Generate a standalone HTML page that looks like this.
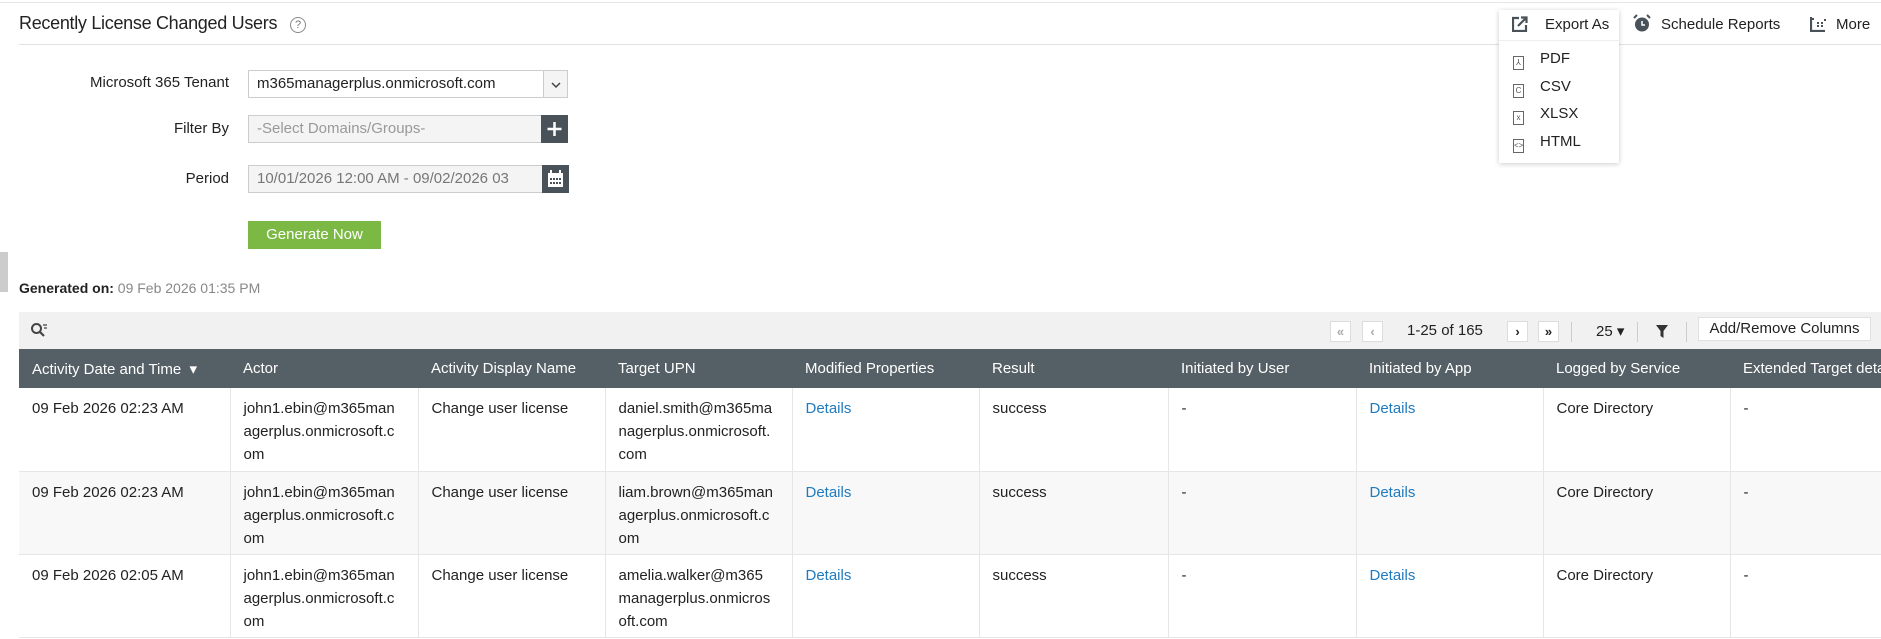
<!DOCTYPE html>
<html><head><meta charset="utf-8"><style>
*{box-sizing:border-box;margin:0;padding:0}
body{width:1881px;height:639px;overflow:hidden;background:#fff;font-family:"Liberation Sans",sans-serif;color:#222;font-size:15px;position:relative}
.abs{position:absolute}
.top{left:0;top:2px;width:1881px;height:1px;background:#e6e6e6}
.title{left:19px;top:13px;font-size:18px;color:#222;letter-spacing:-0.3px}
.help{left:290px;top:17px;width:16px;height:16px;border:1px solid #888;border-radius:50%;font-size:11px;color:#777;text-align:center;line-height:14px}
.hr{left:19px;top:44px;width:1862px;height:1px;background:#e2e2e2}
.lbl{font-size:15px;color:#222;text-align:right;width:200px}
.inp{border:1px solid #ccc;height:28px;font-size:15px;line-height:26px;padding-left:8px}
.btn{background:#4a5259;color:#fff}
.gen{left:248px;top:221px;width:133px;height:28px;background:#7cb944;color:#fff;text-align:center;line-height:28px;font-size:15px}
.tool{left:19px;top:312px;width:1862px;height:37px;background:#f1f1f1}
.pb{border:1px solid #ddd;background:#fff;width:21px;height:21px;text-align:center;font-size:13px;line-height:19px;font-weight:bold}
table{position:absolute;left:19px;top:349px;border-collapse:collapse;table-layout:fixed;width:1900px}
th{background:#555f66;color:#fff;font-weight:normal;text-align:left;height:39px;padding-left:13px;font-size:15px;white-space:nowrap;overflow:hidden}
td{vertical-align:top;padding:9px 13px 0;line-height:23px;height:83px;border-right:1px solid #e6e6e6;border-bottom:1px solid #e6e6e6;font-size:15px}
tr.alt td{background:#f8f8f8}
a{color:#1f7bbf;text-decoration:none}
.dd{left:1499px;top:10px;width:120px;height:153px;background:#fff;box-shadow:0 1px 5px rgba(0,0,0,.2)}
.ddi{position:absolute;left:14px;font-size:15px}
.ic{display:inline-block;width:11px;height:14px;border:1px solid #666;margin-right:16px;vertical-align:-2px;font-size:8px;text-align:center;line-height:12px;color:#555}
</style></head><body>
<div class="abs top"></div>
<div class="abs title">Recently License Changed Users</div>
<div class="abs help">?</div>
<div class="abs hr"></div>

<div class="abs lbl" style="left:29px;top:74px">Microsoft 365 Tenant</div>
<div class="abs inp" style="left:248px;top:70px;width:320px;background:#fff">m365managerplus.onmicrosoft.com</div>
<div class="abs" style="left:543px;top:71px;width:24px;height:26px;border-left:1px solid #ccc;background:#f4f4f4"><svg width="24" height="26"><path d="M8 12l4 4 4-4" stroke="#444" stroke-width="1.5" fill="none"/></svg></div>

<div class="abs lbl" style="left:29px;top:120px">Filter By</div>
<div class="abs inp" style="left:248px;top:115px;width:297px;background:#f4f4f4;color:#999">-Select Domains/Groups-</div>
<div class="abs btn" style="left:541px;top:115px;width:27px;height:28px"><svg width="27" height="28"><path d="M13.5 7v14M6.5 14h14" stroke="#fff" stroke-width="2.5"/></svg></div>

<div class="abs lbl" style="left:29px;top:170px">Period</div>
<div class="abs inp" style="left:248px;top:165px;width:300px;background:#f4f4f4;color:#777;overflow:hidden;white-space:nowrap">10/01/2026 12:00 AM - 09/02/2026 03</div>
<div class="abs btn" style="left:542px;top:165px;width:27px;height:28px"><svg width="27" height="28"><rect x="6" y="8" width="15" height="14" fill="#fff"/><rect x="6" y="8" width="15" height="3" fill="#fff"/><path d="M9 5v4M18 5v4" stroke="#fff" stroke-width="2"/><g fill="#4a5259"><rect x="8" y="13" width="2" height="2"/><rect x="11" y="13" width="2" height="2"/><rect x="14" y="13" width="2" height="2"/><rect x="17" y="13" width="2" height="2"/><rect x="8" y="17" width="2" height="2"/><rect x="11" y="17" width="2" height="2"/><rect x="14" y="17" width="2" height="2"/><rect x="17" y="17" width="2" height="2"/></g></svg></div>

<div class="abs gen">Generate Now</div>
<div class="abs" style="left:0;top:252px;width:8px;height:40px;background:#ccc"></div>

<div class="abs" style="left:19px;top:280px;font-size:14px"><b>Generated on:</b> <span style="color:#888">09 Feb 2026 01:35 PM</span></div>

<div class="abs tool"></div>
<svg class="abs" style="left:30px;top:322px" width="18" height="16"><circle cx="6.5" cy="6.5" r="4.5" stroke="#444" stroke-width="2" fill="none"/><path d="M10 10l4 4" stroke="#444" stroke-width="2.2"/><path d="M13 3h4M14 6h3" stroke="#444" stroke-width="1.2"/></svg>
<div class="abs pb" style="left:1330px;top:321px;color:#aaa">«</div>
<div class="abs pb" style="left:1362px;top:321px;color:#aaa">‹</div>
<div class="abs" style="left:1407px;top:322px;font-size:15px">1-25 of 165</div>
<div class="abs pb" style="left:1507px;top:321px">›</div>
<div class="abs pb" style="left:1538px;top:321px">»</div>
<div class="abs" style="left:1571px;top:322px;width:1px;height:20px;background:#ccc"></div>
<div class="abs" style="left:1596px;top:322px;font-size:15px">25 ▾</div>
<div class="abs" style="left:1637px;top:322px;width:1px;height:20px;background:#ccc"></div>
<svg class="abs" style="left:1655px;top:323px" width="14" height="16"><path d="M1 2h12l-4.5 6v7l-3-2V8z" fill="#333"/></svg>
<div class="abs" style="left:1686px;top:322px;width:1px;height:20px;background:#ccc"></div>
<div class="abs" style="left:1698px;top:317px;width:173px;height:24px;background:#fff;border:1px solid #e0e0e0;text-align:center;line-height:22px;font-size:15px">Add/Remove Columns</div>

<table>
<colgroup><col style="width:211px"><col style="width:188px"><col style="width:187px"><col style="width:187px"><col style="width:187px"><col style="width:189px"><col style="width:188px"><col style="width:187px"><col style="width:187px"><col style="width:189px"></colgroup>
<tr><th>Activity Date and Time &nbsp;▾</th><th>Actor</th><th>Activity Display Name</th><th>Target UPN</th><th>Modified Properties</th><th>Result</th><th>Initiated by User</th><th>Initiated by App</th><th>Logged by Service</th><th>Extended Target details</th></tr>
<tr><td>09 Feb 2026 02:23 AM</td><td>john1.ebin@m365man agerplus.onmicrosoft.c om</td><td>Change user license</td><td>daniel.smith@m365ma nagerplus.onmicrosoft. com</td><td><a>Details</a></td><td>success</td><td>-</td><td><a>Details</a></td><td>Core Directory</td><td>-</td></tr>
<tr class="alt"><td>09 Feb 2026 02:23 AM</td><td>john1.ebin@m365man agerplus.onmicrosoft.c om</td><td>Change user license</td><td>liam.brown@m365man agerplus.onmicrosoft.c om</td><td><a>Details</a></td><td>success</td><td>-</td><td><a>Details</a></td><td>Core Directory</td><td>-</td></tr>
<tr><td>09 Feb 2026 02:05 AM</td><td>john1.ebin@m365man agerplus.onmicrosoft.c om</td><td>Change user license</td><td>amelia.walker@m365 managerplus.onmicros oft.com</td><td><a>Details</a></td><td>success</td><td>-</td><td><a>Details</a></td><td>Core Directory</td><td>-</td></tr>
</table>

<div class="abs dd">
<div class="ddi" style="top:6px;left:46px">Export As</div>
<div style="position:absolute;top:30px;left:0;width:120px;height:1px;background:#eee"></div>
<div class="ddi" style="top:40px"><span class="ic">⅄</span>PDF</div>
<div class="ddi" style="top:68px"><span class="ic">C</span>CSV</div>
<div class="ddi" style="top:95px"><span class="ic">x</span>XLSX</div>
<div class="ddi" style="top:123px"><span class="ic">&lt;&gt;</span>HTML</div>
</div>
<svg class="abs" style="left:1512px;top:16px" width="16" height="16"><path d="M7 2H1v13h13V9" stroke="#4a5259" stroke-width="2.2" fill="none"/><path d="M6 10l8-8M9 1.5h5.5V7" stroke="#4a5259" stroke-width="2.2" fill="none"/></svg>
<svg class="abs" style="left:1633px;top:14px" width="18" height="19"><circle cx="9" cy="10.5" r="7" fill="#4a5259"/><path d="M9 7v4h3" stroke="#fff" stroke-width="1.5" fill="none"/><path d="M1 4l3-3M17 4l-3-3" stroke="#4a5259" stroke-width="2"/></svg>
<div class="abs" style="left:1661px;top:16px;font-size:15px">Schedule Reports</div>
<svg class="abs" style="left:1810px;top:16px" width="16" height="16"><path d="M1 1v14h14" stroke="#4a5259" stroke-width="2.2" fill="none"/><path d="M1 3h3M7 7h2M11 7h2M7 10h2M11 10h2M14 4h2" stroke="#4a5259" stroke-width="2"/></svg>
<div class="abs" style="left:1836px;top:16px;font-size:15px">More</div>
</body></html>
